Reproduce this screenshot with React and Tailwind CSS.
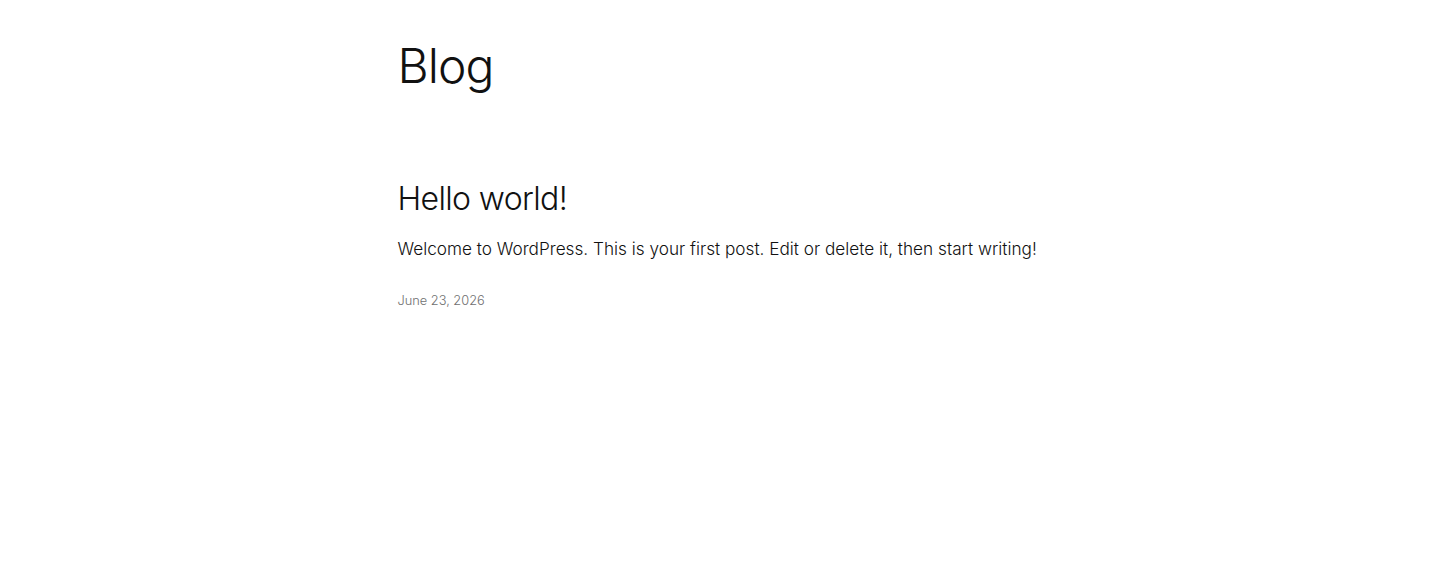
export default function App() {
  return (
    <div className="min-h-screen bg-white text-[#111111]" style={{ fontFamily: "Inter, 'Noto Sans', sans-serif" }}>
      <main className="mx-auto w-[645px]">
        <h1 className="pt-[37px] text-[48px] font-light leading-[1.2] tracking-[-0.02em]">Blog</h1>
        <article className="mt-[85px]">
          <h2 className="text-[32px] font-light leading-[1.2] tracking-[-0.02em]">Hello world!</h2>
          <p className="mt-[18px] text-[17.2px] font-light leading-[1.55]">
            Welcome to WordPress. This is your first post. Edit or delete it, then start writing!
          </p>
          <p className="mt-[28px] text-[12.8px] font-light text-[#707070]">June 23, 2026</p>
        </article>
      </main>
    </div>
  );
}
